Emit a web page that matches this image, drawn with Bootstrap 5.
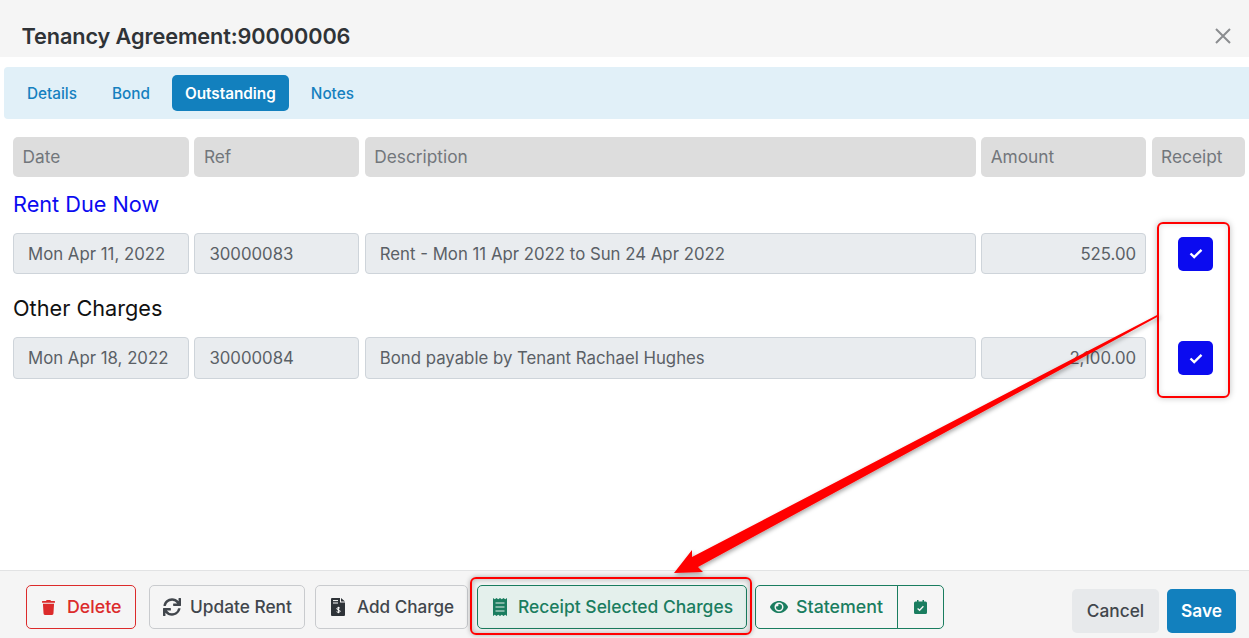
<!doctype html>
<html lang="en">
<head>
<meta charset="utf-8">
<title>Tenancy Agreement</title>
<link href="https://cdn.jsdelivr.net/npm/bootstrap@5.3.0/dist/css/bootstrap.min.css" rel="stylesheet">
<style>
html,body{height:638px;overflow:hidden;background:#fff}
body{font-family:Inter,"Liberation Sans",sans-serif;font-size:16px;color:#212529;position:relative}
.sheet{height:638px}
.top-bar{height:57px;background:#f5f5f5;padding:0 17px 0 21.5px}
.top-title{font-size:21.7px;font-weight:600;color:#2f3337;margin:0;letter-spacing:-.1px;padding-top:22px;line-height:28px}
.close-x{width:18px;height:18px;margin-top:27px;color:#8b8d90}
.tab-strip{margin:10px 0 0 4px;height:52px;background:#e1f0f8;border-radius:4px 0 0 4px;padding:8px 10px;gap:9px}
.tab-strip .nav-link{height:36px;padding:1px 13px 0;font-size:15.3px;font-weight:500;line-height:36px;color:#1580bf;border-radius:5px}
.tab-strip .nav-link.active{background:#1280be;color:#fff;font-weight:600}
.grid-line{display:grid;grid-template-columns:176px 165px 611px 165px 93px;column-gap:5.4px;margin:0 4px 0 13px}
.head-line{margin-top:18px}
.head-cell{height:40px;background:#ddd;border-radius:5px;padding:0 9.500px;line-height:40px;color:#72767b;font-size:17.3px}
.sec-title{font-size:21.7px;font-weight:400;line-height:28px;margin:0 0 0 13px}
.sec-blue{color:#0b0bf0;margin-top:13px;height:43px}
.sec-dark{color:#111;margin-top:20px;height:43px}
.val-input{height:41px;background:#e9ecef;border:1px solid #ced4da;border-radius:4px;padding:1px 14px 0;line-height:39px;color:#5a6066;font-size:16.8px;white-space:nowrap}
.val-right{text-align:right;padding-right:9px}
.val-tall{height:42px}
.tick-wrap{display:flex;align-items:center;justify-content:center}
.tick-box{width:35px;height:34px;background:#0b0bf0;border-radius:5px;display:flex;align-items:center;justify-content:center;margin-left:-5px}
.bottom-bar{position:absolute;left:0;right:0;top:570px;height:68px;background:#f5f5f5;border-top:1px solid #e2e3e4;padding:14px 13px 0 26px}
.act-btn{height:44px;font-size:17.3px;font-weight:500;padding:0;display:inline-flex;align-items:center;border-radius:5px;white-space:nowrap;background:transparent}
.act-del{width:110px;border:1px solid #dc2b2b;color:#dc2b2b;padding-left:15px;gap:12px;margin-right:13px;font-size:17.8px}
.act-gray{border:1px solid #c9cbce;color:#41464c}
.act-upd{width:156px;margin-right:10px;padding-left:13px;gap:9px}
.act-chg{width:153px;margin-right:9px;padding-left:15px;gap:12px;font-size:17.1px}
.act-rcp{width:270px;border:1px solid #1a7d5f;color:#1a7d5f;background:#e4f0ec;margin-right:8px;padding-left:15px;gap:11px;font-size:17.45px}
.act-stm{width:143px;border:1px solid #1a7d5f;color:#1a7d5f;border-radius:5px 0 0 5px;padding-left:14px;gap:8px;font-size:17.8px}
.act-cal{width:47px;border:1px solid #1a7d5f;border-left:1px solid #1a7d5f;color:#1a7d5f;border-radius:0 5px 5px 0;justify-content:center;padding:0;margin-left:-1px}
.end-btns{margin-top:4px;gap:8px}
.end-cancel{height:44px;width:87px;background:#e7e9eb;color:#41464c;border:0;font-size:17.3px;font-weight:500;padding:0;border-radius:5px}
.end-save{height:44px;width:69px;background:#1280be;color:#fff;border:0;font-size:17.3px;font-weight:600;padding:0;border-radius:5px}
.mark-box{position:absolute;border:2px solid #f00;border-radius:6px;pointer-events:none}
.mark-ticks{left:1157px;top:222px;width:73px;height:176px;box-shadow:0 0 6px rgba(0,0,0,.25),inset 0 0 6px rgba(0,0,0,.12)}
.mark-rcp{left:470px;top:577px;width:282px;height:58px;box-shadow:0 0 5px rgba(0,0,0,.3),inset 0 0 6px rgba(0,0,0,.3)}
.arrow-layer{position:absolute;left:0;top:0;width:1249px;height:638px;pointer-events:none}
</style>
</head>
<body>
<div class="sheet">
  <div class="top-bar d-flex justify-content-between align-items-start">
    <h5 class="top-title">Tenancy Agreement:90000006</h5>
    <svg class="close-x" viewBox="0 0 18 18"><path d="M2 2 16 16M16 2 2 16" stroke="currentColor" stroke-width="2" fill="none"/></svg>
  </div>
  <ul class="nav tab-strip">
    <li class="nav-item"><a class="nav-link" href="#">Details</a></li>
    <li class="nav-item"><a class="nav-link" href="#">Bond</a></li>
    <li class="nav-item"><a class="nav-link active" href="#">Outstanding</a></li>
    <li class="nav-item"><a class="nav-link" href="#">Notes</a></li>
  </ul>
  <div class="grid-line head-line">
    <div class="head-cell">Date</div><div class="head-cell">Ref</div><div class="head-cell">Description</div><div class="head-cell">Amount</div><div class="head-cell">Receipt</div>
  </div>
  <h5 class="sec-title sec-blue">Rent Due Now</h5>
  <div class="grid-line">
    <div class="val-input">Mon Apr 11, 2022</div><div class="val-input">30000083</div><div class="val-input">Rent - Mon 11 Apr 2022 to Sun 24 Apr 2022</div><div class="val-input val-right">525.00</div>
    <div class="tick-wrap"><span class="tick-box"><svg width="14" height="11" viewBox="0 0 14 11"><path d="M1.5 5.5 5.2 9 12.5 1.8" stroke="#fff" stroke-width="2.4" fill="none"/></svg></span></div>
  </div>
  <h5 class="sec-title sec-dark">Other Charges</h5>
  <div class="grid-line">
    <div class="val-input val-tall">Mon Apr 18, 2022</div><div class="val-input val-tall">30000084</div><div class="val-input val-tall">Bond payable by Tenant Rachael Hughes</div><div class="val-input val-tall val-right">2,100.00</div>
    <div class="tick-wrap"><span class="tick-box"><svg width="14" height="11" viewBox="0 0 14 11"><path d="M1.5 5.5 5.2 9 12.5 1.8" stroke="#fff" stroke-width="2.4" fill="none"/></svg></span></div>
  </div>
</div>
<div class="bottom-bar d-flex justify-content-between align-items-start">
  <div class="d-flex">
    <button class="btn act-btn act-del"><svg width="13" height="15" viewBox="0 0 448 512" fill="currentColor"><path d="M432 32H312l-9.4-18.7A24 24 0 0 0 281.1 0H166.8a23.72 23.72 0 0 0-21.4 13.3L136 32H16A16 16 0 0 0 0 48v32a16 16 0 0 0 16 16h416a16 16 0 0 0 16-16V48a16 16 0 0 0-16-16zM53.2 467a48 48 0 0 0 47.9 45h245.8a48 48 0 0 0 47.9-45L416 128H32z"/></svg>Delete</button>
    <button class="btn act-btn act-gray act-upd"><svg width="18" height="18" viewBox="0 0 512 512" fill="currentColor"><path d="M440.65 12.57l4 82.77A247.16 247.16 0 0 0 255.83 8C134.73 8 33.91 94.92 12.29 209.82A12 12 0 0 0 24.09 224h49.05a12 12 0 0 0 11.67-9.26 175.91 175.91 0 0 1 317-56.94l-101.46-4.86a12 12 0 0 0-12.57 12v47.41a12 12 0 0 0 12 12H500a12 12 0 0 0 12-12V12a12 12 0 0 0-12-12h-47.37a12 12 0 0 0-11.98 12.57zM255.83 432a175.61 175.61 0 0 1-146-77.8l101.8 4.87a12 12 0 0 0 12.57-12v-47.4a12 12 0 0 0-12-12H12a12 12 0 0 0-12 12V500a12 12 0 0 0 12 12h47.35a12 12 0 0 0 12-12.6l-4.15-82.57A247.17 247.17 0 0 0 255.83 504c121.11 0 221.93-86.92 243.55-201.82a12 12 0 0 0-11.8-14.18h-49.05a12 12 0 0 0-11.67 9.26A175.86 175.86 0 0 1 255.83 432z"/></svg>Update Rent</button>
    <button class="btn act-btn act-gray act-chg"><svg width="14" height="18" viewBox="0 0 14 18"><path d="M1 0h8v4.5h5V17a1 1 0 0 1-1 1H1a1 1 0 0 1-1-1V1a1 1 0 0 1 1-1zM10 0l4 3.5h-4z" fill="#2e3338"/><path d="M2 2.6h5M2 5h5" stroke="#fff" stroke-width="1"/><path d="M9 10.2c-.6-.7-3.2-.8-3.2.6 0 1.5 3.4.8 3.4 2.4 0 1.4-2.800 1.300-3.600.5M7.400 8.800v6.400" stroke="#fff" stroke-width="1" fill="none"/></svg>Add Charge</button>
    <button class="btn act-btn act-rcp"><svg width="14" height="18" viewBox="0 0 14 18" fill="currentColor"><path d="M0 0l1.750 1.300L3.500 0l1.750 1.300L7 0l1.750 1.300L10.500 0l1.750 1.300L14 0v18l-1.750-1.300L10.500 18l-1.750-1.300L7 18l-1.750-1.300L3.500 18l-1.750-1.300L0 18z"/><path d="M2.500 5h9M2.500 9h9M2.500 13h9" stroke="#e4f0ec" stroke-width="1.200"/></svg>Receipt Selected Charges</button>
    <div class="btn-group">
      <button class="btn act-btn act-stm"><svg width="18" height="16" viewBox="0 0 576 512" fill="currentColor"><path d="M572.52 241.4C518.29 135.59 410.93 64 288 64S57.68 135.64 3.48 241.41a32.35 32.35 0 0 0 0 29.19C57.71 376.41 165.07 448 288 448s230.32-71.64 284.52-177.41a32.35 32.35 0 0 0 0-29.19zM288 400a144 144 0 1 1 144-144 143.93 143.93 0 0 1-144 144zm0-240a95.31 95.31 0 0 0-25.31 3.79 47.85 47.85 0 0 1-66.9 66.9A95.78 95.78 0 1 0 288 160z"/></svg>Statement</button>
      <button class="btn act-btn act-cal" aria-label="Calendar"><svg width="13" height="14" viewBox="0 0 13 14" fill="currentColor"><path d="M3 0h1.500v1.500h4V0H10v1.500h1.500A1.500 1.500 0 0 1 13 3v9.500a1.500 1.500 0 0 1-1.500 1.500h-10A1.500 1.500 0 0 1 0 12.500V3a1.500 1.500 0 0 1 1.500-1.500H3z"/><path d="M3.600 8.500 5.600 10.300 9.400 6.300" stroke="#f5f5f5" stroke-width="1.300" fill="none"/></svg></button>
    </div>
  </div>
  <div class="d-flex end-btns">
    <button class="btn end-cancel">Cancel</button>
    <button class="btn end-save">Save</button>
  </div>
</div>
<div class="mark-box mark-ticks"></div>
<div class="mark-box mark-rcp"></div>
<svg class="arrow-layer" viewBox="0 0 1249 638">
  <defs><filter id="sh" x="-5%" y="-5%" width="110%" height="110%"><feDropShadow dx="1" dy="2" stdDeviation="2" flood-color="#000" flood-opacity=".35"/></filter></defs>
  <path d="M1159 314 1159 316 698 567 703 572 674 573 692 550 692 557z" fill="#f00" filter="url(#sh)"/>
</svg>
</body>
</html>
